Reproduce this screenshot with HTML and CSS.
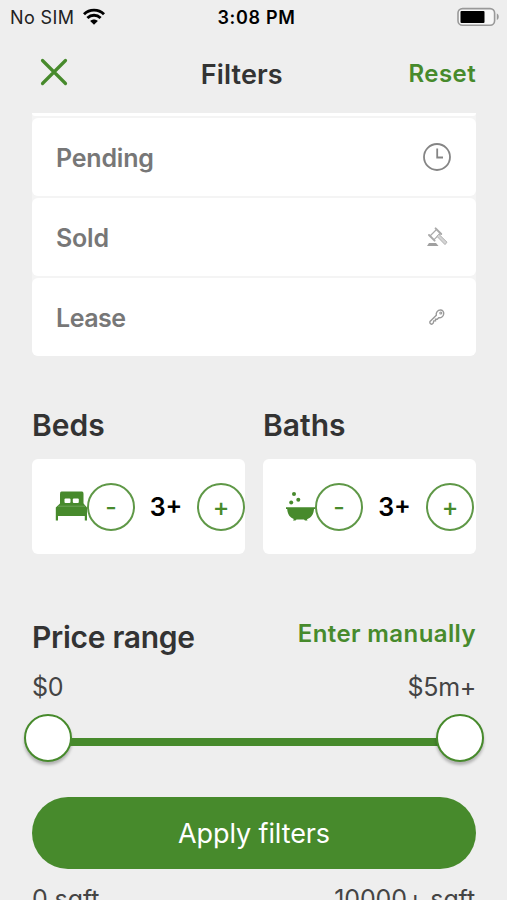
FILE: index.html
```html
<!DOCTYPE html>
<html lang="en">
<head>
	<meta charset="UTF-8">
	<title>Filters</title>
	<link rel="stylesheet" href="styles.css">
</head>
<body>

<div class="status">
	<div class="carrier">
		<span class="sim">No SIM</span>
		<svg class="wifi" width="24" height="18" viewBox="0 0 24 18">
			<path d="M2 6.2C7.6 .8 16.4 .8 22 6.2M5.4 10C9.2 6.4 14.8 6.4 18.6 10" fill="none" stroke="#000" stroke-width="2.9"/>
			<path d="M8.2 13C10.4 11 13.6 11 15.8 13L12 16.8Z"/>
		</svg>
	</div>
	<span class="time">3:08 PM</span>
	<svg class="battery" width="43" height="20" viewBox="0 0 43 20">
		<rect x="1" y="1.6" width="36.6" height="16.6" rx="4.5" fill="#f7f7f7" stroke="#999" stroke-width="1.6"/>
		<rect x="3.5" y="4" width="24" height="12" rx="1"/>
		<path d="M39.8 6.5C42.4 7.6 42.4 12 39.8 13.1Z" fill="#999"/>
	</svg>
</div>

<header class="header">
	<svg class="close" width="28" height="28" viewBox="0 0 28 28">
		<path d="M2.5 2.5L25.5 25.5M25.5 2.5L2.5 25.5" stroke="#478a2c" stroke-width="3.2" stroke-linecap="round"/>
	</svg>
	<h1 class="title">Filters</h1>
	<a class="link reset">Reset</a>
</header>

<ul class="types">
	<li class="type cut"></li>
	<li class="type">
		<span class="pending">Pending</span>
		<svg width="30" height="30" viewBox="0 0 30 30" fill="none" stroke="#858585">
			<circle cx="15" cy="15" r="13" stroke-width="1.8"/>
			<path d="M15.2 6.5V15.5H21" stroke-width="1.8"/>
		</svg>
	</li>
	<li class="type">
		<span class="sold">Sold</span>
		<svg width="30" height="30" viewBox="0 0 30 30" fill="none" stroke="#b0b0b0">
			<path d="M8 14L14.5 7.5M11.8 17.8L18.3 11.3" stroke="#aaa" stroke-width="1.2"/>
			<path d="M7 13L12.6 18.6M13.6 6.4L19.2 12" stroke="#aaa" stroke-width="2" stroke-linecap="round"/>
			<path d="M14.8 14.2L16.8 12.2L25 20.2L23 22.6Z" fill="#d4d4d4" stroke-width="1"/>
			<path d="M5 24L7 21H14L16.5 24Z" fill="#a0a0a0" stroke="none"/>
		</svg>
	</li>
	<li class="type">
		<span class="lease">Lease</span>
		<svg width="30" height="30" viewBox="0 0 30 30" fill="none" stroke="#999">
			<path d="M8 19.5L14.3 13.2C13.7 10.5 15.7 8 18.4 8C20.6 8 22 9.7 21.7 12C21.3 14.7 19 16.2 16.7 15.7L15.2 17.2H13.5V18.9H11.8L11.2 21.2L9.8 22.2C8.2 22 7.5 21 8 19.5Z" stroke-width="1.4"/>
			<circle cx="18.8" cy="11" r="1" stroke-width="1.1"/>
		</svg>
	</li>
</ul>

<div class="rooms">
	<section>
		<h2 class="beds">Beds</h2>
		<div class="counter">
			<svg class="icon" width="32" height="32" viewBox="0 0 32 32" fill="#478a2c">
				<path d="M5 2.8Q5 .6 6.5 .6H27Q28.5 .6 28.5 2.8V13H5Z"/>
				<path d="M.8 16.5L5 12.5H28.5L32 16.5V29.5H29.8V25H3V29.5H.8Z"/>
				<path d="M3 15.2H30" stroke="#8cb57a" stroke-width=".6"/>
				<rect x="9.5" y="7.4" width="6" height="4.6" rx="1" fill="#fff"/>
				<rect x="17.8" y="7.4" width="6" height="4.6" rx="1" fill="#fff"/>
			</svg>
			<button class="round">-</button>
			<span class="count wide">3+</span>
			<button class="round">+</button>
		</div>
	</section>
	<section>
		<h2 class="baths">Baths</h2>
		<div class="counter bath">
			<svg class="icon" width="30" height="32" viewBox="0 0 30 32" fill="#478a2c">
				<circle cx="9" cy="3" r="2"/>
				<circle cx="13.3" cy="8.7" r="2"/>
				<circle cx="6.2" cy="11.6" r="2"/>
				<path d="M1 16.2H30V18H29C28.6 23.4 26.4 26.8 22 28.2L22.5 29.6H20L19 28.5H11.5L10.5 29.6H8L8.8 28C4.8 26.4 2.6 23.4 2.2 18H1Z"/>
			</svg>
			<button class="round">-</button>
			<span class="count">3+</span>
			<button class="round">+</button>
		</div>
	</section>
</div>

<div class="price-head">
	<h2 class="price">Price range</h2>
	<a class="link manual">Enter manually</a>
</div>
<div class="limits">
	<span class="min">$0</span>
	<span class="max">$5m+</span>
</div>
<div class="slider">
	<i class="thumb"></i>
	<i class="track"></i>
	<i class="thumb"></i>
</div>

<button class="apply"><span>Apply filters</span></button>

<div class="limits area">
	<span class="area-min">0 sqft</span>
	<span class="area-max">10000+ sqft</span>
</div>

</body>
</html>
```
FILE: styles.css
```css
* {
	box-sizing: border-box;
}
body {
	margin: 0;
	height: 900px;
	overflow: hidden;
	background: #eee;
	color: #333;
	font-family: Inter, "Liberation Sans", sans-serif;
}
h1,
h2,
ul {
	margin: 0;
	padding: 0;
	list-style: none;
}
svg {
	display: block;
	flex: none;
}
span,
a,
h1,
h2 {
	white-space: nowrap;
}
button {
	margin: 0;
	padding: 0;
	font-family: inherit;
}

/* status bar */
.status {
	display: grid;
	grid-template-columns: 1fr auto 1fr;
	align-items: center;
	height: 34px;
	padding: 0 7px 0 12px;
	color: #000;
	font-size: 18px;
}
.carrier {
	display: flex;
	align-items: center;
	gap: 8px;
	margin-left: -2px;
}
.sim {
	color: #222;
	letter-spacing: .4px;
}
.time {
	padding-left: 1px;
	font-weight: 600;
	letter-spacing: .7px;
}
.battery {
	justify-self: end;
}

/* header */
.header {
	display: flex;
	align-items: center;
	justify-content: space-between;
	height: 79px;
	padding: 0 31px 0 40px;
}
.close {
	margin: -4px 7px 0 0;
}
.title {
	padding-top: 1px;
	font-size: 27px;
	font-weight: 600;
	letter-spacing: .1px;
}
.link {
	color: #478a2c;
	font-size: 24px;
	font-weight: 600;
	letter-spacing: .4px;
}

/* listing types */
.types {
	display: flex;
	flex-direction: column;
	gap: 2px;
	margin: 0 31px 0 32px;
	background: #f4f4f4;
	border-radius: 0 0 6px 6px;
}
.type {
	display: flex;
	align-items: center;
	justify-content: space-between;
	height: 78px;
	padding: 0 24px;
	background: #fff;
	border-radius: 6px;
	color: #777;
	font-size: 25px;
	font-weight: 600;
	letter-spacing: -.2px;
}
.type span {
	padding-top: 1px;
}
.lease {
	letter-spacing: -.5px;
}
.cut {
	height: 3px;
	border-radius: 0 0 3px 3px;
}

/* beds and baths */
.rooms {
	display: grid;
	grid-template-columns: 213px 213px;
	justify-content: space-between;
	margin: 49px 31px 0 32px;
}
h2 {
	height: 40px;
	line-height: 41px;
	font-size: 30px;
	font-weight: 600;
}
.counter {
	display: flex;
	align-items: center;
	height: 95px;
	margin-top: 14px;
	padding-left: 23px;
	background: #fff;
	border-radius: 6px;
}
.bath {
	padding-left: 22px;
}
.round {
	flex: none;
	width: 48px;
	height: 48px;
	background: none;
	border: 2px solid #5f9847;
	border-radius: 50%;
	color: #478a2c;
	font-size: 25px;
	font-weight: 500;
}
.count {
	width: 63px;
	text-align: center;
	color: #000;
	font-size: 25px;
	font-weight: 600;
}
.wide {
	width: 64px;
}

/* price range */
.price-head {
	display: flex;
	justify-content: space-between;
	margin: 63px 31px 0 32px;
}
.price {
	letter-spacing: -.3px;
}
.manual {
	line-height: 33px;
}
.limits {
	display: flex;
	justify-content: space-between;
	margin: 15px 31px 0 32px;
	color: #444;
	font-size: 25px;
	line-height: 31px;
	letter-spacing: -.3px;
}
.area {
	margin-right: 32px;
	letter-spacing: -.1px;
}
.slider {
	display: flex;
	align-items: center;
	height: 48px;
	margin: 11px 23px 0 24px;
}
.thumb {
	flex: none;
	width: 48px;
	height: 48px;
	background: #fff;
	border: 2px solid #478a2c;
	border-radius: 50%;
	box-shadow: 0 3px 3px rgba(0, 0, 0, .25);
}
.track {
	flex: 1;
	height: 8px;
	margin: 7px -2px 0;
	background: #478a2c;
}

.apply {
	display: block;
	width: 444px;
	height: 72px;
	margin: 35px 0 0 32px;
	background: #478a2c;
	border: none;
	border-radius: 36px;
	color: #fff;
	font-size: 27px;
	letter-spacing: -.1px;
}
```
